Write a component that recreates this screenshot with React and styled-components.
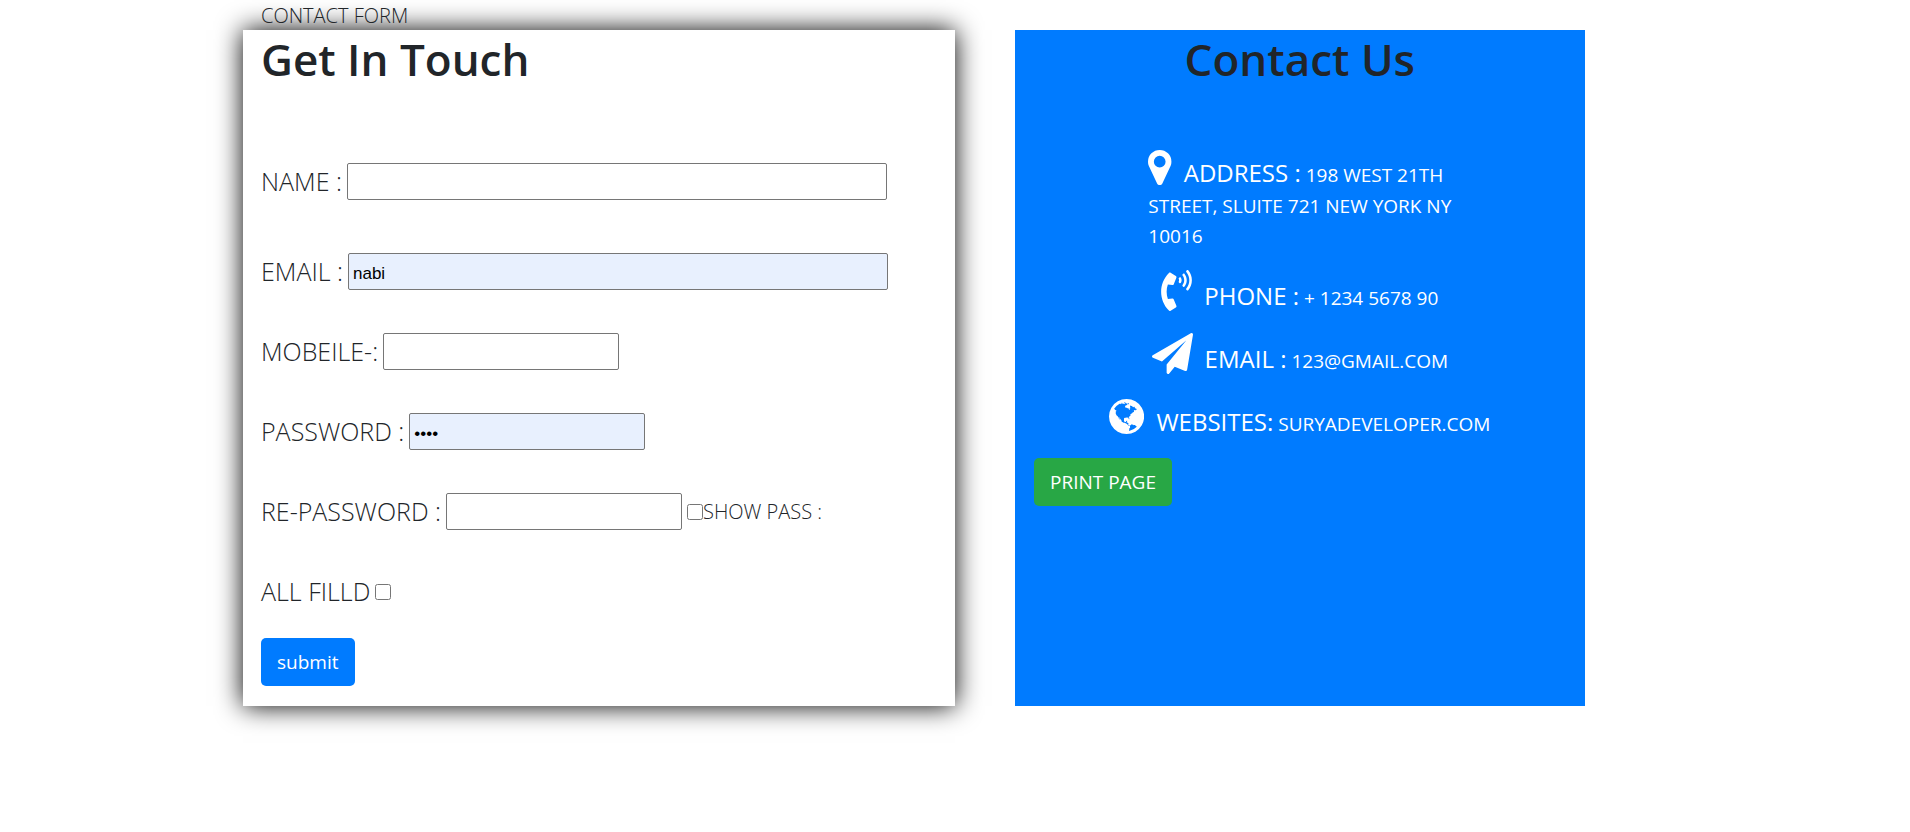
import React, { useState } from "react";
import styled, { createGlobalStyle } from "styled-components";
import { FaPhoneVolume } from "react-icons/fa";

const GlobalStyle = createGlobalStyle`
  *, *::before, *::after { box-sizing: border-box; }
  body {
    margin: 0;
    background: #fff;
    color: #212529;
    font: 400 19px/30px "Open Sans", "Noto Sans", sans-serif;
  }
`;

const Container = styled.main`
  max-width: 1424px;
  margin: 0 auto;
  padding-bottom: 60px;
`;

const PageLabel = styled.p`
  position: relative;
  z-index: 1;
  margin: 0;
  padding: 1px 18px 0;
  line-height: 29px;
  font-size: 20px;
  font-weight: 300;
`;

const Columns = styled.div`
  display: flex;
  gap: 60px;
`;

const FormPanel = styled.form`
  flex: 0 0 50%;
  padding: 0 18px 20px;
  background: #fff;
  box-shadow: 0 0 25px #000;
`;

const ContactPanel = styled.section`
  flex: 0 0 40%;
  padding: 0 19px 20px;
  background: #007bff;
  color: #fff;
`;

const Title = styled.h1`
  margin: 0;
  font-size: 44px;
  line-height: 58px;
  font-weight: 550;
  color: #212529;
  text-align: ${(p) => (p.$centered ? "center" : "left")};
`;

const Fields = styled.div`
  display: flex;
  flex-direction: column;
  gap: 43px;
  margin: 75px 0 28px;
`;

const Field = styled.div`
  display: flex;
  align-items: center;
  gap: 5px;
  height: 37px;
  margin-bottom: ${(p) => (p.$spaced ? "10px" : "0")};
  white-space: nowrap;
`;

const FieldLabel = styled.label`
  padding-bottom: 2px;
  font-size: 25px;
  font-weight: 300;
`;

const TextInput = styled.input`
  width: ${(p) => (p.$wide ? "540px" : "236px")};
  height: 37px;
  padding: 5px 4px 0;
  border: 1px solid #767676;
  border-radius: 2px;
  background: ${(p) => (p.$filled ? "#e8f0fe" : "#fff")};
  color: #000;
  font: 17px "Liberation Sans", Arial, sans-serif;
`;

const CheckInput = styled.input`
  flex: none;
  width: 16px;
  height: 16px;
  margin: 0;
`;

const CheckLabel = styled.label`
  display: flex;
  align-items: center;
  font-size: 20px;
  font-weight: 300;
`;

const Button = styled.button`
  display: block;
  height: 48px;
  padding: 0 16px;
  border: 0;
  border-radius: 5px;
  background: ${(p) => (p.$green ? "#28a745" : "#007bff")};
  color: #fff;
  font: inherit;
  cursor: pointer;
`;

const ContactList = styled.div`
  display: flex;
  flex-direction: column;
  align-items: center;
  gap: 19px;
  margin: 59px 0 18px;
`;

const ContactItem = styled.p`
  margin: 0;
  white-space: nowrap;

  svg {
    height: 41px;
    margin-right: 12px;
    vertical-align: -6px;
    fill: currentColor;
  }
`;

const PhoneIcon = styled(FaPhoneVolume)`
  width: 31px;
`;

const Term = styled.span`
  font-size: 24px;
  line-height: 36px;
`;

const MapMarker = () => (
  <svg viewBox="384 0 1024 1792" aria-hidden="true">
    <path d="M1152 640q0-106-75-181t-181-75-181 75-75 181 75 181 181 75 181-75 75-181zm256 0q0 109-33 179l-364 774q-16 33-47.500 52t-67.500 19-67.500-19-46.500-52l-365-774q-33-70-33-179 0-212 150-362t362-150 362 150 150 362z" />
  </svg>
);

const PaperPlane = () => (
  <svg viewBox="0 0 1792 1792" aria-hidden="true">
    <path d="M1764 11q33 24 27 64l-256 1536q-5 29-32 45-14 8-31 8-11 0-24-5l-453-185-242 295q-18 23-49 23-13 0-22-4-19-7-30.500-23.500t-11.500-36.500v-349l864-1059-1069 925-395-162q-37-14-40-55-2-40 32-59l1664-960q15-9 32-9 20 0 36 11z" />
  </svg>
);

const Globe = () => (
  <svg viewBox="128 0 1536 1792" aria-hidden="true">
    <path d="M896 128q209 0 385.500 103t279.500 279.500 103 385.500-103 385.500-279.500 279.500-385.500 103-385.500-103-279.500-279.500-103-385.500 103-385.500 279.500-279.500 385.500-103zm274 521q-2 1-9.500 9.500t-13.500 9.500q2 0 4.500-5t5-11 3.500-7q6-7 22-15 14-6 52-12 34-8 51 11-2-2 9.500-13t14.500-12q3-2 15-4.500t15-7.500l2-22q-12 1-17.500-7t-6.500-21q0 2-6 8 0-7-4.500-8t-11.500 1-9 1q-10-3-15-7.500t-8-16.500-4-15q-2-5-9.500-11t-9.500-10q-1-2-2.500-5.500t-3-6.500-4-5.500-5.500-2.500-7 5-7.500 10-4.500 5q-3-2-6-1.500t-4.500 1-4.500 3-5 3.500q-3 2-8.500 3t-8.500 2q15-5-1-11-10-4-16-3 9-4 7.500-12t-8.500-14h5q-1-4-8.500-8.500t-17.500-8.500-13-6q-8-5-34-9.500t-33-.5q-5 6-4.500 10.500t4 14 3.500 12.500q1 6-5.500 13t-6.500 12q0 7 14 15.500t10 21.500q-3 8-16 16t-16 12q-5 8-1.500 18.500t10.500 16.500q2 2 1.500 4t-3.500 4.500-5.500 4-6.500 3.500l-3 2q-11 5-20.500-6t-13.500-26q-7-25-16-30-23-8-29 1-5-13-41-26-25-9-58-4 6-1 0-15-7-15-19-12 3-6 4-17.500t1-13.500q3-13 12-23 1-1 7-8.500t9.500-13.500.5-6q35 4 50-11 5-5 11.500-17t10.500-17q9-6 14-5.500t14.500 5.500 14.500 5q14 1 15.500-11t-7.500-20q12 1 3-17-4-7-8-9-12-4-27 5-8 4 2 8-1-1-9.500 10.500t-16.500 17.500-16-5q-1-1-5.500-13.500t-9.500-13.500q-8 0-16 15 3-8-11-15t-24-8q19-12-8-27-7-4-20.500-5t-19.500 4q-5 7-5.500 11.500t5 8 10.500 5.500 11.500 4 8.500 3q14 10 8 14-2 1-8.500 3.500t-11.500 4.500-6 4q-3 4 0 14t-2 14q-5-5-9-17.500t-7-16.500q7 9-25 6l-10-1q-4 0-16 2t-20.500 1-13.500-8q-4-8 0-20 1-4 4-2-4-3-11-9.500t-10-8.500q-46 15-94 41 6 1 12-1 5-2 13-6.500t10-5.500q34-14 42-7l5-5q14 16 20 25-7-4-30-1-20 6-22 12 7 12 5 18-4-3-11.500-10t-14.500-11-15-5q-16 0-22 1-146 80-235 222 7 7 12 8 4 1 5 9t2.500 11 11.500-3q9 8 3 19 1-1 44 27 19 17 21 21 3 11-10 18-1-2-9-9t-9-4q-3 5 .5 18.500t10.500 12.500q-7 0-9.500 16t-2.500 35.500-1 23.500l2 1q-3 12 5.500 34.500t21.500 19.500q-13 3 20 43 6 8 8 9 3 2 12 7.500t15 10 10 10.500q4 5 10 22.500t14 23.500q-2 6 9.500 20t10.500 23q-1 0-2.500 1t-2.500 1q3 7 15.500 14t15.500 13q1 3 2 10t3 11 8 2q2-20-24-62-15-25-17-29-3-5-5.500-15.500t-4.500-14.500q2 0 6 1.500t8.500 3.500 7.500 4 2 3q-3 7 2 17.500t12 18.500 17 19 12 13q6 6 14 19.500t0 13.500q9 0 20 10.500t17 19.500q5 8 8 26t5 24q2 7 8.500 13.500t12.500 9.500l16 8 13 7q5 2 18.500 10.500t21.500 11.500q10 4 16 4t14.500-2.500 13.500-3.500q15-2 29 15t21 21q36 19 55 11-2 1 .5 7.500t8 15.500 9 14.500 5.500 8.500q5 6 18 15t18 15q6-4 7-9-3 8 7 20t18 10q14-3 14-32-31 15-49-18 0-1-2.500-5.500t-4-8.500-2.500-8.500 0-7.500 5-3q9 0 10-3.500t-2-12.500-4-13q-1-8-11-20t-12-15q-5 9-16 8t-16-9q0 1-1.500 5.500t-1.500 6.500q-13 0-15-1 1-3 2.500-17.500t3.500-22.500q1-4 5.500-12t7.500-14.500 4-12.500-4.500-9.500-17.500-2.500q-19 1-26 20-1 3-3 10.500t-5 11.500-9 7q-7 3-24 2t-24-5q-13-8-22.500-29t-9.500-37q0-10 2.500-26.500t3-25-5.500-24.500q3-2 9-9.500t10-10.500q2-1 4.500-1.500t4.500 0 4-1.500 3-6q-1-1-4-3-3-3-4-3 7 3 28.500-1.500t27.500 1.500q15 11 22-2 0-1-2.500-9.500t-.5-13.500q5 27 29 9 3 3 15.500 5t17.500 5q3 2 7 5.500t5.500 4.500 5-.5 8.500-6.500q10 14 12 24 11 40 19 44 7 3 11 2t4.500-9.500 0-14-1.500-12.500l-1-8v-18l-1-8q-15-3-18.500-12t1.500-18.500 15-18.500q1-1 8-3.500t15.500-6.500 12.500-8q21-19 15-35 7 0 11-9-1 0-5-3t-7.500-5-4.500-2q9-5 2-16 5-3 7.500-11t7.500-10q9 12 21 2 7-8 1-16 5-7 20.500-10.500t18.500-9.500q7 2 8-2t1-12 3-12q4-5 15-9t13-5l17-11q3-4 0-4 18 2 31-11 10-11-6-20 3-6-3-9.500t-15-5.500q3-1 11.500-.5t10.500-1.500q15-10-7-16-17-5-43 12zm-163 877q206-36 351-189-3-3-12.500-4.500t-12.500-3.500q-18-7-24-8 1-7-2.500-13t-8-9-12.500-8-11-7q-2-2-7-6t-7-5.500-7.500-4.500-8.500-2-10 1l-3 1q-3 1-5.500 2.500t-5.500 3-4 3 0 2.500q-21-17-36-22-5-1-11-5.500t-10.500-7-10-1.500-11.500 7q-5 5-6 15t-2 13q-7-5 0-17.500t2-18.500q-3-6-10.500-4.500t-12 4.500-11.500 8.500-9 6.500-8.500 5.500-8.500 7.500q-3 4-6 12t-5 11q-2-4-11.500-6.500t-9.500-5.500q2 10 4 35t5 38q7 31-12 48-27 25-29 40-4 22 12 26 0 7-8 20.500t-7 21.500q0 6 2 16z" />
  </svg>
);

export default function App() {
  const [values, setValues] = useState({ name: "", email: "nabi", mobile: "", password: "1234", repeat: "" });
  const [showPass, setShowPass] = useState(false);
  const bind = (key) => ({
    id: key,
    value: values[key],
    onChange: (e) => setValues({ ...values, [key]: e.target.value }),
  });
  const passType = showPass ? "text" : "password";

  return (
    <>
      <GlobalStyle />
      <Container>
        <PageLabel>CONTACT FORM</PageLabel>
        <Columns>
          <FormPanel onSubmit={(e) => e.preventDefault()}>
            <Title>Get In Touch</Title>
            <Fields>
              <Field $spaced>
                <FieldLabel htmlFor="name">NAME :</FieldLabel>
                <TextInput type="text" $wide {...bind("name")} />
              </Field>
              <Field>
                <FieldLabel htmlFor="email">EMAIL :</FieldLabel>
                <TextInput type="text" $wide $filled {...bind("email")} />
              </Field>
              <Field>
                <FieldLabel htmlFor="mobile">MOBEILE-:</FieldLabel>
                <TextInput type="text" {...bind("mobile")} />
              </Field>
              <Field>
                <FieldLabel htmlFor="password">PASSWORD :</FieldLabel>
                <TextInput type={passType} $filled {...bind("password")} />
              </Field>
              <Field>
                <FieldLabel htmlFor="repeat">RE-PASSWORD :</FieldLabel>
                <TextInput type={passType} {...bind("repeat")} />
                <CheckLabel>
                  <CheckInput type="checkbox" checked={showPass} onChange={(e) => setShowPass(e.target.checked)} />
                  SHOW PASS :
                </CheckLabel>
              </Field>
              <Field>
                <FieldLabel htmlFor="filled">ALL FILLD</FieldLabel>
                <CheckInput id="filled" type="checkbox" />
              </Field>
            </Fields>
            <Button type="submit">submit</Button>
          </FormPanel>
          <ContactPanel>
            <Title as="h2" $centered>Contact Us</Title>
            <ContactList>
              <ContactItem>
                <MapMarker />
                <Term>ADDRESS :</Term> 198 WEST 21TH
                <br />
                STREET, SLUITE 721 NEW YORK NY
                <br />
                10016
              </ContactItem>
              <ContactItem>
                <PhoneIcon aria-hidden="true" />
                <Term>PHONE :</Term> + 1234 5678 90
              </ContactItem>
              <ContactItem>
                <PaperPlane />
                <Term>EMAIL :</Term> 123@GMAIL.COM
              </ContactItem>
              <ContactItem>
                <Globe />
                <Term>WEBSITES:</Term> SURYADEVELOPER.COM
              </ContactItem>
            </ContactList>
            <Button type="button" $green onClick={() => window.print()}>PRINT PAGE</Button>
          </ContactPanel>
        </Columns>
      </Container>
    </>
  );
}
